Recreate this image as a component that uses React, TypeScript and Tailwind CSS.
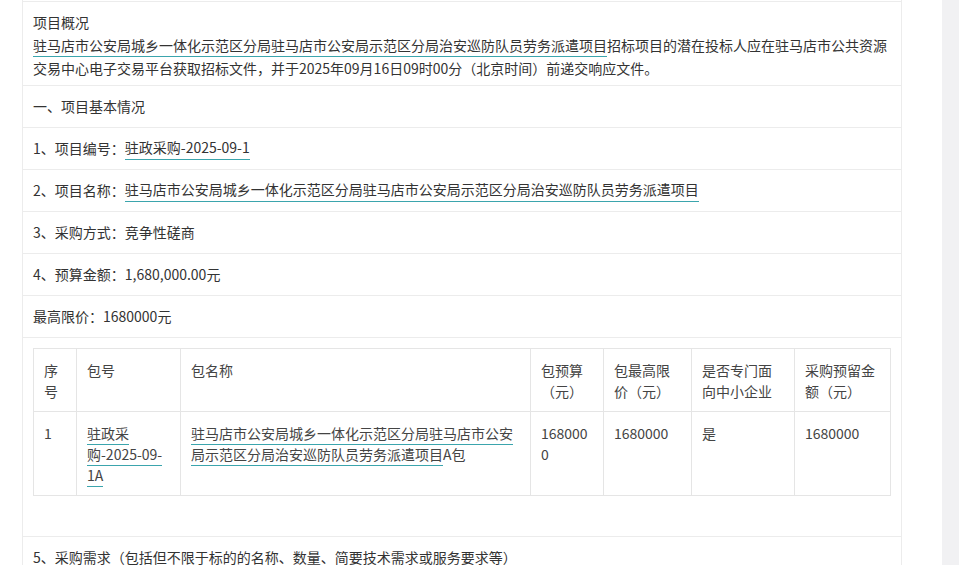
const U = ({ children }: { children: React.ReactNode }) => (
  <span className="border-b border-[#3ba5ad] pb-[1px]">{children}</span>
)

const ROW = 'h-[42px] flex items-center px-[10px] border-b border-[#ececec]'
const TD = 'border border-[#e5e5e5] px-[10px] pt-[11px]'

export default function App() {
  return (
    <div className="w-[959px] h-[565px] overflow-hidden bg-white flex text-[14px] text-[#333]" style={{ fontFamily: '"Noto Sans CJK SC", "Noto Sans", sans-serif' }}>
      <div className="w-[22px]" />
      <div className="w-[880px] border-x border-[#ececec]">
        <div className="h-[2px] border-b border-[#ececec]" />
        <div className="px-[10px] pt-[9px] pb-[5px] leading-[23px] border-b border-[#ececec]">
          <div>项目概况</div>
          <div>
            <U>驻马店市公安局城乡一体化示范区分局驻马店市公安局示范区分局治安巡防队员劳务派遣项目</U>招标项目的潜在投标人应在驻马店市公共资源交易中心电子交易平台获取招标文件，并于2025年09月16日09时00分（北京时间）前递交响应文件。
          </div>
        </div>
        <div className={ROW}>一、项目基本情况</div>
        <div className={ROW}>1、项目编号：<U>驻政采购-2025-09-1</U></div>
        <div className={ROW}>2、项目名称：<U>驻马店市公安局城乡一体化示范区分局驻马店市公安局示范区分局治安巡防队员劳务派遣项目</U></div>
        <div className={ROW}>3、采购方式：竞争性磋商</div>
        <div className={ROW}>4、预算金额：1,680,000.00元</div>
        <div className={ROW}>最高限价：1680000元</div>
        <div className="px-[10px] pt-[10px] h-[199px] border-b border-[#ececec]">
          <table className="border-collapse leading-[21px] text-[#444]">
            <colgroup>
              <col className="w-[43px]" /><col className="w-[104px]" /><col className="w-[350px]" />
              <col className="w-[73px]" /><col className="w-[88px]" /><col className="w-[103px]" /><col className="w-[96px]" />
            </colgroup>
            <tbody>
              <tr className="h-[63px] align-top">
                <td className={TD}>序号</td>
                <td className={TD}>包号</td>
                <td className={TD}>包名称</td>
                <td className={TD}>包预算（元）</td>
                <td className={TD}>包最高限价（元）</td>
                <td className={TD}>是否专门面向中小企业</td>
                <td className={TD}>采购预留金额（元）</td>
              </tr>
              <tr className="h-[84px] align-top">
                <td className={TD}>1</td>
                <td className={TD}><U>驻政采</U><br /><U>购-2025-09-</U><br /><U>1A</U></td>
                <td className={TD}><U>驻马店市公安局城乡一体化示范区分局驻马店市公安局示范区分局治安巡防队员劳务派遣项目</U>A包</td>
                <td className={`${TD} break-all`}>1680000</td>
                <td className={TD}>1680000</td>
                <td className={TD}>是</td>
                <td className={TD}>1680000</td>
              </tr>
            </tbody>
          </table>
        </div>
        <div className={ROW}>5、采购需求（包括但不限于标的的名称、数量、简要技术需求或服务要求等）</div>
      </div>
      <div className="w-[40px]" />
      <div className="w-[17px] bg-[#f1f1f3]" />
    </div>
  )
}
